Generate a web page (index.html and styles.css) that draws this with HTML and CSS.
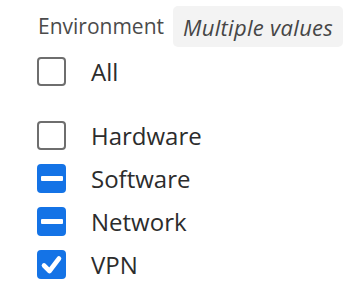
FILE: index.html
```html
<!DOCTYPE html>
<html>
<head>
<meta charset="utf-8">
<link rel="stylesheet" href="styles.css">
</head>
<body>
<div class="group">
  <div class="label-row">
    <span class="label">Environment</span>
    <span class="chip">Multiple values</span>
  </div>
  <div class="option all">
    <span class="box"></span>
    <span class="text">All</span>
  </div>
  <div class="options">
    <div class="option">
      <span class="box"></span>
      <span class="text">Hardware</span>
    </div>
    <div class="option">
      <span class="box filled"><span class="dash"></span></span>
      <span class="text">Software</span>
    </div>
    <div class="option">
      <span class="box filled"><span class="dash"></span></span>
      <span class="text">Network</span>
    </div>
    <div class="option">
      <span class="box filled">
        <svg width="29" height="29" viewBox="0 0 29 29"><path d="M7 15.5 L12.5 21 L22 8.5" fill="none" stroke="#fff" stroke-width="4.6" stroke-linecap="round" stroke-linejoin="round"/></svg>
      </span>
      <span class="text">VPN</span>
    </div>
  </div>
</div>
</body>
</html>
```

FILE: styles.css
```css
html, body {
  margin: 0;
  padding: 0;
  background: #ffffff;
}
.group {
  display: flex;
  flex-direction: column;
  padding: 6px 0 0 37px;
  font-family: "Open Sans", "Noto Sans", sans-serif;
}
.label-row {
  display: flex;
  align-items: center;
  height: 41px;
}
.label {
  font-size: 21px;
  color: #4b4b4b;
  margin-left: 1px;
  margin-right: 9px;
  line-height: 1;
}
.chip {
  display: flex;
  align-items: center;
  height: 41px;
  padding: 0 10px;
  background: #f3f3f3;
  border-radius: 5px;
  font-size: 22px;
  letter-spacing: 0.3px;
  font-style: italic;
  color: #464646;
}
.option {
  display: flex;
  align-items: center;
  height: 43px;
}
.all {
  margin-top: 3px;
}
.options {
  display: flex;
  flex-direction: column;
  margin-top: 21px;
}
.box {
  box-sizing: border-box;
  width: 29px;
  height: 29px;
  border: 2px solid #6e6e6e;
  border-radius: 4px;
  display: flex;
  align-items: center;
  justify-content: center;
  flex: none;
  position: relative;
}
.box.filled {
  background: #1473e6;
  border-color: #1473e6;
}
.box svg {
  position: absolute;
  left: -2px;
  top: -2px;
}
.dash {
  width: 22px;
  height: 5px;
  background: #fff;
  border-radius: 1px;
}
.text {
  margin-left: 25px;
  font-size: 24px;
  color: #2c2c2c;
  line-height: 1;
}
```
